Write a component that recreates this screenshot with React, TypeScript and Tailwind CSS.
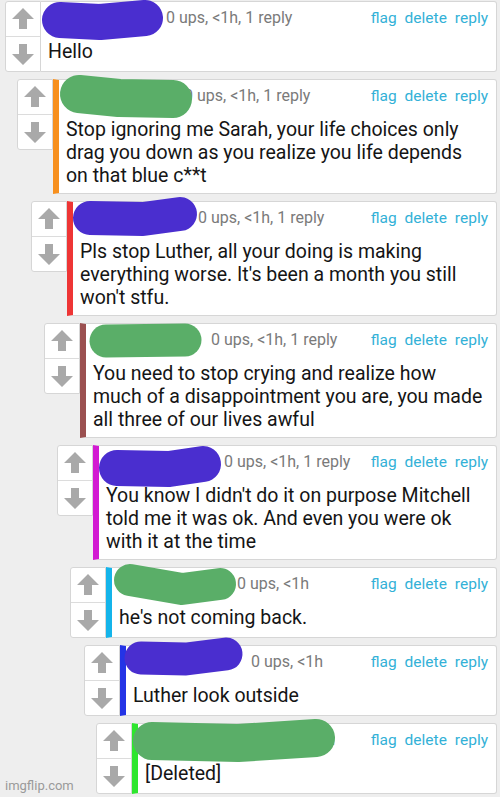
type Comment = {
  indent: string;
  bar: string;
  blob: string;
  blobPath: string;
  blobWidth: number;
  meta: string;
  lines: string[];
};

const PURPLE = "#4a2ecf";
const GREEN = "#5aae68";

const comments: Comment[] = [
  {
    indent: "ml-[5px]",
    bar: "border-l-0",
    blob: PURPLE,
    blobPath: "M19 18 L59 20 L104 16",
    blobWidth: 36,
    meta: "0 ups, <1h, 1 reply",
    lines: ["Hello"],
  },
  {
    indent: "ml-[17px]",
    bar: "border-l-[6px] border-l-[#f7901e]",
    blob: GREEN,
    blobPath: "M20 14 L60 18 L114 19",
    blobWidth: 38,
    meta: "0 ups, <1h, 1 reply",
    lines: [
      "Stop ignoring me Sarah, your life choices only",
      "drag you down as you realize you life depends",
      "on that blue c**t",
    ],
  },
  {
    indent: "ml-[31px]",
    bar: "border-l-[6px] border-l-[#ee3535]",
    blob: PURPLE,
    blobPath: "M17 16 L70 17 L107 12",
    blobWidth: 34,
    meta: "0 ups, <1h, 1 reply",
    lines: [
      "Pls stop Luther, all your doing is making",
      "everything worse. It's been a month you still",
      "won't stfu.",
    ],
  },
  {
    indent: "ml-[44px]",
    bar: "border-l-[6px] border-l-[#9b5050]",
    blob: GREEN,
    blobPath: "M20 17 L99 16",
    blobWidth: 33,
    meta: "0 ups, <1h, 1 reply",
    lines: [
      "You need to stop crying and realize how",
      "much of a disappointment you are, you made",
      "all three of our lives awful",
    ],
  },
  {
    indent: "ml-[57px]",
    bar: "border-l-[6px] border-l-[#d21ad2]",
    blob: PURPLE,
    blobPath: "M18 22 L70 23 L104 18",
    blobWidth: 36,
    meta: "0 ups, <1h, 1 reply",
    lines: [
      "You know I didn't do it on purpose Mitchell",
      "told me it was ok. And even you were ok",
      "with it at the time",
    ],
  },
  {
    indent: "ml-[70px]",
    bar: "border-l-[6px] border-l-[#14b4ea]",
    blob: GREEN,
    blobPath: "M18 12 L70 21 L108 16",
    blobWidth: 32,
    meta: "0 ups, <1h",
    lines: ["he's not coming back."],
  },
  {
    indent: "ml-[84px]",
    bar: "border-l-[6px] border-l-[#2434e6]",
    blob: PURPLE,
    blobPath: "M15 12 L60 13 L100 8",
    blobWidth: 33,
    meta: "0 ups, <1h",
    lines: ["Luther look outside"],
  },
  {
    indent: "ml-[96px]",
    bar: "border-l-[6px] border-l-[#2ee62e]",
    blob: GREEN,
    blobPath: "M14 17 L100 19 L178 14",
    blobWidth: 38,
    meta: "0 ups, <1h",
    lines: ["[Deleted]"],
  },
];

function Arrow({ down }: { down?: boolean }) {
  return (
    <svg width="22" height="22" viewBox="0 0 22 22" className={down ? "rotate-180" : ""}>
      <polygon points="11,0 22,11 15,11 15,21 7,21 7,11 0,11" fill="#a9a9a9" />
    </svg>
  );
}

function CommentCard({ c }: { c: Comment }) {
  return (
    <div className={`flex items-start mr-[3px] ${c.indent}`}>
      <div className="w-[36px] h-[71px] shrink-0 flex flex-col bg-white border border-[#d6d6d6] rounded-l-[3px]">
        <div className="flex-1 flex items-center justify-center border-b border-[#dcdcdc]">
          <Arrow />
        </div>
        <div className="flex-1 flex items-center justify-center">
          <Arrow down />
        </div>
      </div>
      <div
        className={`relative flex-1 min-h-[71px] bg-white border border-[#d6d6d6] rounded-r-[3px] pt-[5px] pl-[7px] pr-[8px] pb-[6px] ${c.bar}`}
      >
        <div className="flex items-center h-[22px] text-[16px] leading-[22px]">
          <span className="inline-block w-[118px] shrink-0" />
          <span className="text-[#7a7a7a]">{c.meta}</span>
          <div className="ml-auto flex gap-[8px] text-[15.5px] text-[#33b1d7]">
            <span>flag</span>
            <span>delete</span>
            <span>reply</span>
          </div>
        </div>
        <p className="mt-[11px] text-[19.5px] leading-[23px] text-[#151515]">
          {c.lines.map((l, i) => (
            <span key={i}>
              {l}
              {i < c.lines.length - 1 && <br />}
            </span>
          ))}
        </p>
        <svg
          className="absolute left-0 top-0 pointer-events-none overflow-visible"
          width="200"
          height="44"
        >
          <path
            d={c.blobPath}
            fill="none"
            stroke={c.blob}
            strokeWidth={c.blobWidth}
            strokeLinecap="round"
            strokeLinejoin="round"
          />
        </svg>
      </div>
    </div>
  );
}

export default function App() {
  return (
    <div
      className="relative w-[500px] h-[797px] overflow-hidden bg-[#eeeeee] pt-[1px]"
      style={{ fontFamily: "Roboto, 'Noto Sans', sans-serif" }}
    >
      <div className="flex flex-col gap-[7px]">
        {comments.map((c, i) => (
          <CommentCard key={i} c={c} />
        ))}
      </div>
      <span className="absolute left-[5px] bottom-[4px] text-[13px] leading-[14px] text-[#9a9a9a]">
        imgflip.com
      </span>
    </div>
  );
}
